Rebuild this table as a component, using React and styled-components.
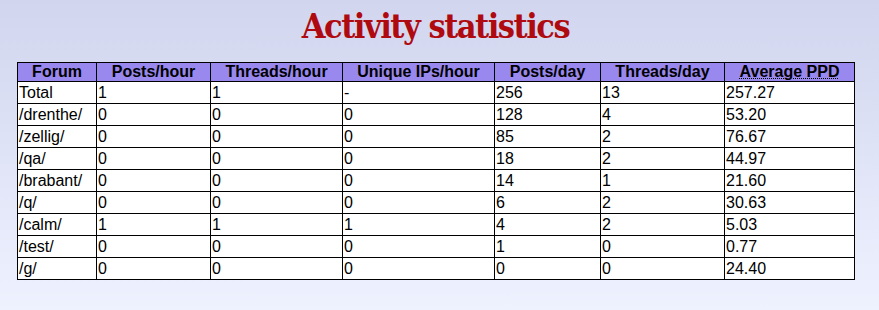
import React from "react";
import styled, { createGlobalStyle } from "styled-components";

const Global = createGlobalStyle`
  html, body { margin: 0; padding: 0; }
  body {
    min-height: 310px;
    background: linear-gradient(to bottom, #d1d5ee 0px, #eef2ff 310px);
    font-family: "Liberation Sans", Arial, sans-serif;
    color: #000;
  }
`;

const Page = styled.div`
  padding: 0 8px;
  min-height: 310px;
  box-sizing: border-box;
`;

const Title = styled.h1`
  margin: 0;
  padding: 4px 8px 0 0;
  text-align: center;
  font-family: "DejaVu Serif Condensed", "DejaVu Serif", serif;
  font-stretch: condensed;
  font-weight: bold;
  font-size: 34px;
  line-height: 44px;
  letter-spacing: -1.5px;
  color: #af0a0f;
`;

const Table = styled.table`
  margin: 14px 0 0 9px;
  border-collapse: collapse;
  background: #fff;
  table-layout: fixed;
  width: 837px;
`;

const Th = styled.th`
  background: #9988ee;
  border: 1px solid #000;
  padding: 1px;
  font-size: 16px;
  line-height: 16px;
  font-weight: bold;
  text-align: center;
  white-space: nowrap;
`;

const Td = styled.td`
  border: 1px solid #000;
  padding: 1px;
  font-size: 16px;
  line-height: 19px;
  text-align: left;
  white-space: nowrap;
`;

const Abbr = styled.abbr`
  text-decoration: underline dotted;
  text-decoration-thickness: 1px;
`;

const cols = [79, 114, 132, 152, 106, 124, 130];

const headers = ["Forum", "Posts/hour", "Threads/hour", "Unique IPs/hour", "Posts/day", "Threads/day"];

const rows = [
  ["Total", "1", "1", "-", "256", "13", "257.27"],
  ["/drenthe/", "0", "0", "0", "128", "4", "53.20"],
  ["/zellig/", "0", "0", "0", "85", "2", "76.67"],
  ["/qa/", "0", "0", "0", "18", "2", "44.97"],
  ["/brabant/", "0", "0", "0", "14", "1", "21.60"],
  ["/q/", "0", "0", "0", "6", "2", "30.63"],
  ["/calm/", "1", "1", "1", "4", "2", "5.03"],
  ["/test/", "0", "0", "0", "1", "0", "0.77"],
  ["/g/", "0", "0", "0", "0", "0", "24.40"],
];

export default function App() {
  return (
    <>
      <Global />
      <Page>
        <Title>Activity statistics</Title>
        <Table>
          <colgroup>
            {cols.map((w, i) => (
              <col key={i} style={{ width: w }} />
            ))}
          </colgroup>
          <thead>
            <tr>
              {headers.map((h) => (
                <Th key={h}>{h}</Th>
              ))}
              <Th>
                <Abbr title="Average posts per day">Average PPD</Abbr>
              </Th>
            </tr>
          </thead>
          <tbody>
            {rows.map((r) => (
              <tr key={r[0]}>
                {r.map((c, i) => (
                  <Td key={i}>{c}</Td>
                ))}
              </tr>
            ))}
          </tbody>
        </Table>
      </Page>
    </>
  );
}
